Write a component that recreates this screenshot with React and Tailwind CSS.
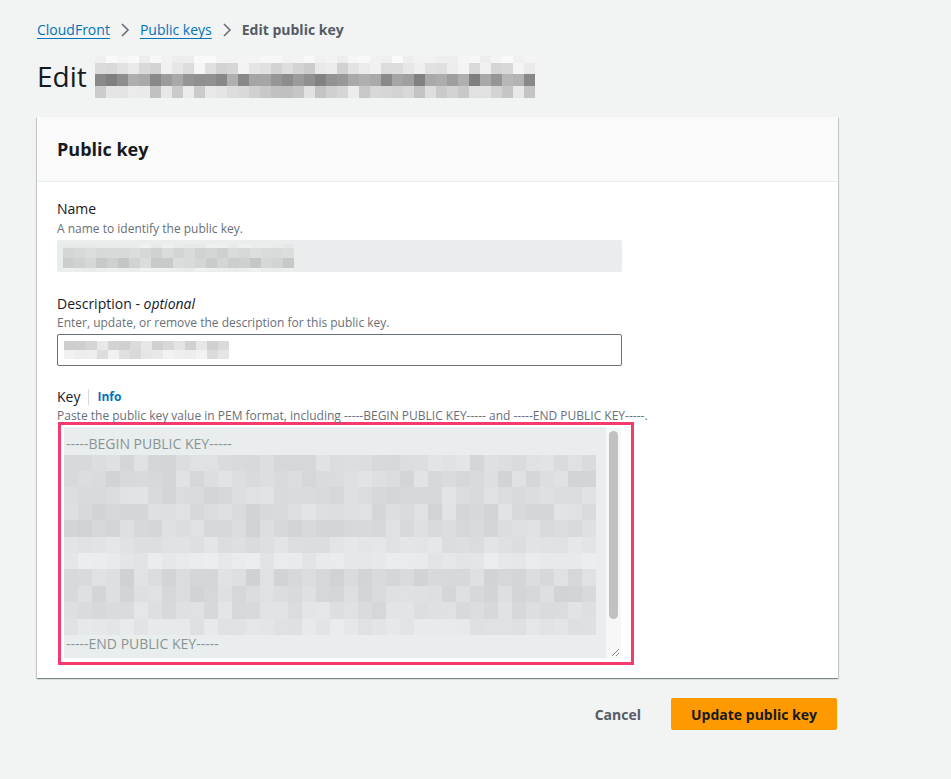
import React from "react";

function rng(seed) {
  let s = seed >>> 0;
  return () => {
    s = (s * 1664525 + 1013904223) >>> 0;
    return s / 4294967296;
  };
}

function Mosaic({ rows, cols, cellClass, seed, tint = 0 }) {
  const r = rng(seed);
  return (
    <div className="flex flex-col">
      {rows.map((row, i) => (
        <div key={i} className="flex" style={{ height: row.h }}>
          {Array.from({ length: row.n ?? cols }).map((_, j) => {
            const v = Math.round(row.lo + (row.hi - row.lo) * r());
            return (
              <div
                key={j}
                className={cellClass}
                style={{ background: `rgb(${v - tint},${v},${v})` }}
              />
            );
          })}
        </div>
      ))}
    </div>
  );
}

function Chevron() {
  return (
    <svg width="10" height="16" viewBox="0 0 10 16" className="mx-[10px]">
      <polyline points="2,2 8,8 2,14" fill="none" stroke="#687078" strokeWidth="1.6" />
    </svg>
  );
}

export default function App() {
  const keyRows = [
    { h: 16, lo: 214, hi: 230 },
    { h: 16, lo: 212, hi: 228 },
    { h: 17, lo: 214, hi: 230 },
    { h: 16, lo: 212, hi: 230 },
    { h: 17, lo: 210, hi: 226 },
    { h: 16, lo: 220, hi: 232 },
    { h: 16, lo: 228, hi: 238 },
    { h: 17, lo: 210, hi: 228 },
    { h: 16, lo: 212, hi: 228 },
    { h: 17, lo: 216, hi: 232 },
    { h: 16, lo: 224, hi: 236 },
  ];
  return (
    <div
      className="min-h-[779px] bg-[#f2f3f3] pl-[37px] pt-[20px] text-[#16191f]"
      style={{ fontFamily: '"Open Sans", "Noto Sans", sans-serif' }}
    >
      {/* breadcrumb */}
      <nav className="flex items-center text-[14px] leading-[20px]">
        <span className="text-[#0073bb] underline underline-offset-[3px]">CloudFront</span>
        <Chevron />
        <span className="text-[#0073bb] underline underline-offset-[3px]">Public keys</span>
        <Chevron />
        <span className="font-bold text-[#545b64]">Edit public key</span>
      </nav>

      {/* title */}
      <div className="mt-[14px] flex items-center">
        <h1 className="text-[28px] leading-[40px] font-normal">Edit</h1>
        <div className="ml-[8px] mt-[2px]">
          <Mosaic
            seed={7}
            cols={40}
            cellClass="w-[11px]"
            rows={[
              { h: 7, lo: 236, hi: 250 },
              { h: 11, lo: 204, hi: 246 },
              { h: 12, lo: 124, hi: 184 },
              { h: 12, lo: 192, hi: 236 },
            ]}
          />
        </div>
      </div>

      {/* card */}
      <div className="mt-[19px] w-[801px] bg-white shadow-[0_1px_1px_0_rgba(0,28,36,0.3),1px_1px_1px_0_rgba(0,28,36,0.15),-1px_1px_1px_0_rgba(0,28,36,0.15)]">
        <div className="flex h-[65px] items-center border-b border-[#eaeded] bg-[#fafafa] px-[20px]">
          <h2 className="text-[18px] font-bold leading-[22px]">Public key</h2>
        </div>
        <div className="px-[20px] pt-[17px] pb-[13px]">
          {/* Name */}
          <div className="text-[14px] leading-[20px]">Name</div>
          <div className="mt-[2px] text-[12px] leading-[16px] text-[#687078]">A name to identify the public key.</div>
          <div className="mt-[3px] h-[32px] w-[565px] rounded-[2px] bg-[#eaeded] pl-[6px] pt-[4px]">
            <Mosaic
              seed={21}
              cols={21}
              cellClass="w-[11px]"
              rows={[
                { h: 4, lo: 232, hi: 242 },
                { h: 10, lo: 208, hi: 226 },
                { h: 10, lo: 198, hi: 222 },
                { h: 3, lo: 234, hi: 244 },
              ]}
              tint={2}
            />
          </div>

          {/* Description */}
          <div className="mt-[22px] text-[14px] leading-[20px]">
            Description - <i>optional</i>
          </div>
          <div className="mt-[1px] text-[12px] leading-[16px] text-[#687078]">
            Enter, update, or remove the description for this public key.
          </div>
          <div className="mt-[3px] h-[32px] w-[565px] rounded-[2px] border border-[#687078] bg-white pl-[6px] pt-[6px]">
            <Mosaic
              seed={33}
              cols={15}
              cellClass="w-[11px]"
              rows={[
                { h: 9, lo: 196, hi: 236 },
                { h: 9, lo: 214, hi: 244 },
              ]}
            />
          </div>

          {/* Key */}
          <div className="mt-[21px] flex items-center text-[14px] leading-[20px]">
            <span>Key</span>
            <span className="mx-[8px] h-[16px] w-px bg-[#d5dbdb]" />
            <span className="text-[12px] font-bold text-[#0073bb]">Info</span>
          </div>
          <div className="mt-[1px] text-[12px] leading-[16px] text-[#687078]">
            Paste the public key value in PEM format, including -----BEGIN PUBLIC KEY----- and -----END PUBLIC KEY-----.
          </div>
          <div className="ml-[1px] mt-[-2px] w-[576px] border-[3px] border-[#f53a6e] bg-white pt-[2px] pb-[4px] pl-[3px] pr-[9px]">
            <div className="flex h-[231px] w-[557px] bg-[#eaeded]">
              <div className="flex flex-1 flex-col pt-[8px] text-[14px] leading-[18px] text-[#879596]">
                <div className="pl-[2px]">-----BEGIN PUBLIC KEY-----</div>
                <div className="mt-[2px]">
                  <Mosaic seed={55} cols={38} cellClass="w-[14px]" rows={keyRows} tint={4} />
                </div>
                <div className="pl-[2px]">-----END PUBLIC KEY-----</div>
              </div>
              <div className="flex w-[15px] flex-col bg-[#f7f7f7]">
                <div className="mx-auto mt-[4px] h-[188px] w-[9px] rounded-full bg-[#c1c1c1]" />
                <div className="flex-1" />
                <div className="flex h-[13px] items-end justify-end pb-[1px] pr-[1px]">
                  <svg width="10" height="10" viewBox="0 0 10 10">
                    <line x1="2" y1="9" x2="9" y2="2" stroke="#8a8a8a" strokeWidth="1" />
                    <line x1="6" y1="9" x2="9" y2="6" stroke="#8a8a8a" strokeWidth="1" />
                  </svg>
                </div>
              </div>
            </div>
          </div>
        </div>
      </div>

      {/* actions */}
      <div className="mt-[20px] flex w-[800px] items-center justify-end">
        <button className="px-[20px] text-[14px] font-bold text-[#545b64]">Cancel</button>
        <button className="ml-[10px] h-[32px] rounded-[2px] bg-[#ff9900] px-[20px] text-[14px] font-bold text-[#16191f]">
          Update public key
        </button>
      </div>
    </div>
  );
}
